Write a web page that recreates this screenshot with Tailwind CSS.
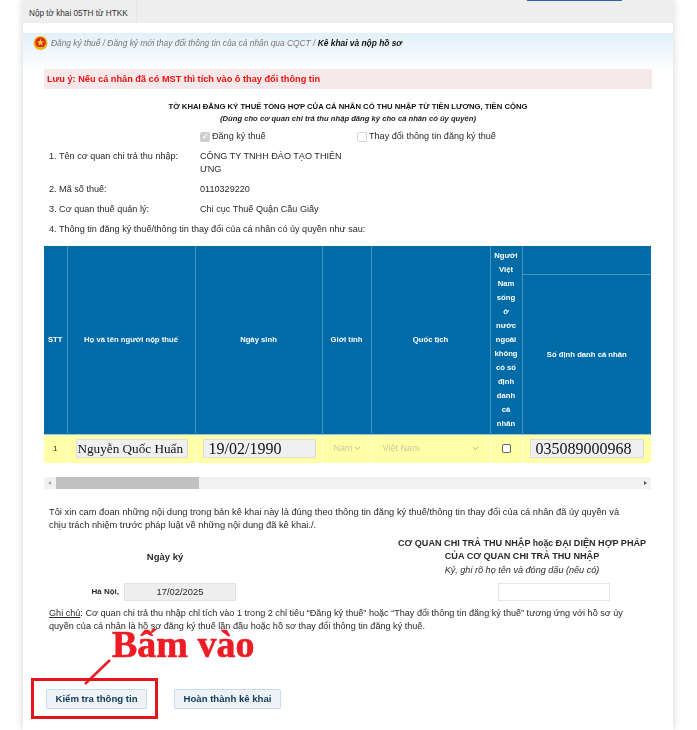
<!DOCTYPE html>
<html lang="vi">
<head>
    <meta charset="UTF-8">
    <meta name="viewport" content="width=device-width, initial-scale=1.0">
    <title>Kê khai và nộp hồ sơ</title>
    <script src="https://cdn.jsdelivr.net/npm/@tailwindcss/browser@4"></script>
</head>

<body class="bg-white font-['Liberation_Sans',Arial,sans-serif] text-[9.1px] text-[#2a2a2a] overflow-hidden">
<div class="relative w-[697px] h-[730px] overflow-hidden blur-[0.35px]">

    <!-- Panel -->
    <div class="ml-[23px] w-[650px] h-[730px] bg-white shadow-[0_0_8px_rgba(0,0,0,0.18)]">

        <!-- Tab bar -->
        <div class="relative -ml-[1px] h-[23px] bg-[#eeeeee] flex">
            <div class="pl-[7px] pr-[8px] pt-[8px] text-[8.2px] leading-[11px] text-[#333] border-r border-[#e4e4e4]">Nộp tờ khai 05TH từ HTKK</div>
            <div class="absolute left-[505px] top-0 w-[95px] h-[1px] bg-[#2b62a8]"></div>
        </div>
        <div class="h-[10px] bg-white"></div>

        <!-- Breadcrumb -->
        <div class="h-[40px] bg-gradient-to-b from-[#e3f0f9] to-white flex items-start pl-[10px] pt-[2px]">
            <svg class="w-[15px] h-[16px] shrink-0" viewBox="0 0 15 16">
                <circle cx="7.5" cy="8" r="7" fill="#e9b21c"/>
                <circle cx="7.5" cy="7.5" r="5.2" fill="#d7261e"/>
                <polygon points="7.5,3.6 8.5,6.4 11.4,6.4 9,8.1 9.900,10.800 7.5,9.2 5.1,10.800 6,8.1 3.6,6.4 6.5,6.4" fill="#f7d321"/>
                <rect x="3.5" y="12" width="8" height="2" fill="#e9b21c"/>
            </svg>
            <div class="ml-[3px] pt-[3px] text-[8.4px] leading-[11px] italic text-[#777]">Đăng ký thuế / Đăng ký mới thay đổi thông tin của cá nhân qua CQCT / <span class="font-bold text-[#111]">Kê khai và nộp hồ sơ</span></div>
        </div>

        <div class="pl-[21px] pr-[21px] w-[650px]">
            <!-- Alert -->
            <div class="-mt-[4px] h-[20px] w-[608px] bg-[#f5e8e8] rounded-[2px] pl-[3px] text-[9.2px] leading-[20px] font-bold text-[#ee1111]">Lưu ý: Nếu cá nhân đã có MST thì tích vào ô thay đổi thông tin</div>

            <!-- Title -->
            <div class="mt-[12px] text-center text-[7.7px] leading-[11px] font-bold text-[#111]">TỜ KHAI ĐĂNG KÝ THUẾ TỔNG HỢP CỦA CÁ NHÂN CÓ THU NHẬP TỪ TIỀN LƯƠNG, TIỀN CÔNG</div>
            <div class="mt-[1px] text-center text-[7.65px] leading-[11px] font-bold italic text-[#222]">(Dùng cho cơ quan chi trả thu nhập đăng ký cho cá nhân có ủy quyền)</div>

            <!-- Checkboxes -->
            <div class="mt-[3px] flex h-[20px] items-center pl-[156px]">
                <span class="w-[10px] h-[10px] rounded-[2px] bg-[#cfcfcf] text-white text-[8px] leading-[10px] text-center font-bold">✓</span>
                <span class="ml-[2px] w-[145px]">Đăng ký thuế</span>
                <span class="w-[10px] h-[10px] rounded-[2px] bg-white border border-[#d4d4d4]"></span>
                <span class="ml-[2px]">Thay đổi thông tin đăng ký thuế</span>
            </div>

            <!-- Info rows -->
            <div class="mt-[3px] grid grid-cols-[151px_146px] pl-[5px] leading-[13px] gap-y-[7px]">
                <div>1. Tên cơ quan chi trả thu nhập:</div>
                <div>CÔNG TY TNHH ĐÀO TẠO THIÊN ƯNG</div>
                <div>2. Mã số thuế:</div>
                <div>0110329220</div>
                <div>3. Cơ quan thuế quản lý:</div>
                <div>Chi cục Thuế Quận Cầu Giấy</div>
            </div>
            <div class="mt-[7px] pl-[5px] leading-[13px]">4. Thông tin đăng ký thuế/thông tin thay đổi của cá nhân có ủy quyền như sau:</div>

            <!-- Table -->
            <table class="mt-[10px] w-[607px] table-fixed border-collapse">
                <colgroup>
                    <col class="w-[23px]"><col class="w-[128px]"><col class="w-[127px]"><col class="w-[49px]"><col class="w-[119px]"><col class="w-[32px]"><col class="w-[129px]">
                </colgroup>
                <thead class="bg-[#006ba6] text-white text-[7.7px] font-bold text-center">
                    <tr class="h-[28px]">
                        <th rowspan="2" class="border-r border-[#4b94c4]">STT</th>
                        <th rowspan="2" class="border-r border-[#4b94c4]">Họ và tên người nộp thuế</th>
                        <th rowspan="2" class="border-r border-[#4b94c4]">Ngày sinh</th>
                        <th rowspan="2" class="border-r border-[#4b94c4]">Giới tính</th>
                        <th rowspan="2" class="border-r border-[#4b94c4]">Quốc tịch</th>
                        <th rowspan="2" class="border-r border-[#4b94c4] leading-[14px] px-0 py-[3px]">Người<br>Việt<br>Nam<br>sống<br>ở<br>nước<br>ngoài<br>không<br>có số<br>định<br>danh<br>cá<br>nhân</th>
                        <th class="border-b border-[#4b94c4]"></th>
                    </tr>
                    <tr class="h-[159px]">
                        <th>Số định danh cá nhân</th>
                    </tr>
                </thead>
                <tbody>
                    <tr class="h-[28px] bg-[#ffffa8] border-t border-[#9cc6dd]">
                        <td class="text-center text-[8px] border-r border-[#ffffd0]">1</td>
                        <td class="border-r border-[#ffffd0] pl-[8px]">
                            <div class="w-[112px] h-[19px] bg-[#f0f0f0] border border-[#dcdcdc] font-['Liberation_Serif',serif] text-[13.2px] leading-[18px] text-[#111] pl-[1px] whitespace-nowrap overflow-hidden">Nguyễn Quốc Huấn</div>
                        </td>
                        <td class="border-r border-[#ffffd0] pl-[7px]">
                            <div class="w-[113px] h-[19px] bg-[#f0f0f0] border border-[#dcdcdc] font-['Liberation_Serif',serif] text-[16px] leading-[18px] text-[#111] pl-[5px]">19/02/1990</div>
                        </td>
                        <td class="border-r border-[#ffffd0] pl-[7px]">
                            <div class="w-[35px] h-[19px] border border-[#f8f8a8] text-[#c9c9a0] flex items-center justify-between pl-[3px] pr-[3px]">Nam
                                <svg class="w-[7px] h-[5px]" viewBox="0 0 7 5" fill="none" stroke="#b5b5a0"><path d="M1 1l2.500 2.500L6 1"/></svg>
                            </div>
                        </td>
                        <td class="border-r border-[#ffffd0] pl-[7px]">
                            <div class="w-[104px] h-[19px] border border-[#f8f8a8] text-[#c9c9a0] flex items-center justify-between pl-[3px] pr-[3px]">Việt Nam
                                <svg class="w-[7px] h-[5px]" viewBox="0 0 7 5" fill="none" stroke="#b5b5a0"><path d="M1 1l2.500 2.500L6 1"/></svg>
                            </div>
                        </td>
                        <td class="border-r border-[#ffffd0]">
                            <div class="mx-auto w-[9px] h-[9px] bg-white border border-[#666] rounded-[2px]"></div>
                        </td>
                        <td class="pl-[7px]">
                            <div class="w-[114px] h-[19px] bg-[#f0f0f0] border border-[#dcdcdc] font-['Liberation_Serif',serif] text-[16px] leading-[18px] text-[#111] pl-[5px]">035089000968</div>
                        </td>
                    </tr>
                </tbody>
            </table>

            <!-- Scrollbar -->
            <div class="mt-[14px] w-[607px] h-[12px] bg-[#f1f1f1] flex items-center justify-between">
                <div class="flex items-center h-full">
                    <svg class="w-[12px] h-[12px] shrink-0" viewBox="0 0 12 12"><path d="M7 4v4L4 6z" fill="#aaa"/></svg>
                    <div class="w-[143px] h-full bg-[#c1c1c1]"></div>
                </div>
                <svg class="w-[12px] h-[12px]" viewBox="0 0 12 12"><path d="M5 4v4l3-2z" fill="#555"/></svg>
            </div>

            <!-- Declaration -->
            <p class="mt-[17px] pl-[5px] w-[580px] text-[9.3px] leading-[13px]">Tôi xin cam đoan những nội dung trong bản kê khai này là đúng theo thông tin đăng ký thuế/thông tin thay đổi của cá nhân đã ủy quyền và chịu trách nhiệm trước pháp luật về những nội dung đã kê khai./.</p>

            <!-- Signatures -->
            <div class="mt-[5px] grid grid-cols-[242px_1fr] items-center">
                <div class="text-center font-bold text-[9.5px] pt-[1px]">Ngày ký</div>
                <div class="text-center pl-[106px] leading-[13.500px]">
                    <div class="font-bold">CƠ QUAN CHI TRẢ THU NHẬP <span class="text-[8.7px]">hoặc</span> ĐẠI DIỆN HỢP PHÁP</div>
                    <div class="font-bold">CỦA CƠ QUAN CHI TRẢ THU NHẬP</div>
                    <div class="italic">Ký, ghi rõ họ tên và đóng dấu (nếu có)</div>
                </div>
            </div>
            <div class="mt-[6px] flex items-center h-[18px]">
                <div class="w-[75px] text-right text-[8px] font-bold">Hà Nội,</div>
                <div class="ml-[5px] w-[112px] h-[18px] bg-[#eeeeee] border border-[#e2e2e2] text-center text-[9.4px] leading-[16px]">17/02/2025</div>
                <div class="ml-[262px] w-[112px] h-[18px] bg-white border border-[#e6e6e6]"></div>
            </div>

            <!-- Note -->
            <p class="mt-[6px] pl-[5px] w-[580px] leading-[13px]"><span class="underline">Ghi chú</span>: Cơ quan chi trả thu nhập chỉ tích vào 1 trong 2 chỉ tiêu “Đăng ký thuế” hoặc “Thay đổi thông tin đăng ký thuế” tương ứng với hồ sơ ủy quyền của cá nhân là hồ sơ đăng ký thuế lần đầu hoặc hồ sơ thay đổi thông tin đăng ký thuế.</p>

            <!-- Buttons -->
            <div class="mt-[56px] ml-[2px] flex gap-[27px]">
                <button class="w-[101px] h-[20px] bg-[#eef1f5] border border-[#c6dcf2] rounded-[2px] text-[9.6px] font-bold text-[#0d3b5c]">Kiểm tra thông tin</button>
                <button class="w-[107px] h-[20px] bg-[#eef1f5] border border-[#c6dcf2] rounded-[2px] text-[9.6px] font-bold text-[#0d3b5c]">Hoàn thành kê khai</button>
            </div>
        </div>
    </div>

    <!-- Annotation over the page -->
    <div class="absolute left-[112px] top-[622px] font-['Liberation_Serif',serif] font-bold text-[38px] leading-[44px] text-[#ed1c24] [-webkit-text-stroke:0.6px_#ed1c24] whitespace-nowrap">Bấm vào</div>
    <svg class="absolute left-[80px] top-[655px] w-[35px] h-[35px]" viewBox="0 0 35 35"><path d="M30 5L5 29" stroke="#ee1c25" stroke-width="2.5"/></svg>
    <div class="absolute left-[31px] top-[678px] w-[127px] h-[41px] border-[3px] border-[#e3151b]"></div>
</div>
</body>
</html>
